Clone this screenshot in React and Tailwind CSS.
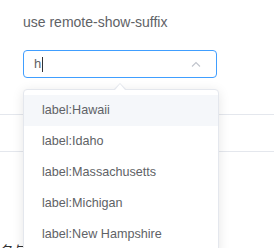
import React from 'react'

const OPTIONS = ['Hawaii', 'Idaho', 'Massachusetts', 'Michigan', 'New Hampshire']

function Chevron() {
  return (
    <svg width="10" height="6" viewBox="0 0 10 6" className="text-[#c0c4cc]">
      <path d="M1 5.5 L5 1.5 L9 5.5" fill="none" stroke="currentColor" strokeWidth="1.1" />
    </svg>
  )
}

function Dropdown() {
  return (
    <div className="absolute left-[23px] top-[89px] w-[196px] rounded border border-[#e4e7ed] bg-white py-[5px] shadow-[0_2px_12px_0_rgba(0,0,0,0.1)]">
      {/* popper arrow */}
      <span className="absolute -top-[7px] left-[90px] h-0 w-0 border-x-[6px] border-b-[6px] border-x-transparent border-b-[#e4e7ed]" />
      <span className="absolute -top-[6px] left-[91px] h-0 w-0 border-x-[5px] border-b-[6px] border-x-transparent border-b-white" />
      {OPTIONS.map((o, i) => (
        <div
          key={o}
          className={`flex h-[31px] items-center px-[18px] text-[12.6px] text-[#606266] ${i === 0 ? 'bg-[#f5f7fa]' : ''}`}
        >
          label:{o}
        </div>
      ))}
    </div>
  )
}

export default function App() {
  return (
    <div className="relative h-[248px] w-[274px] overflow-hidden bg-white font-['Liberation_Sans',Arial,sans-serif]">
      <div className="pl-[23px] pt-[13px] text-[14px] leading-[18px] text-[#606266]">use remote-show-suffix</div>
      <div className="ml-[23px] mt-[19px] flex h-[28px] w-[194px] items-center justify-between rounded border border-[#409eff] pl-[10px] pr-[15px]">
        <span className="flex items-center text-[13px] text-[#606266]">
          h<span className="ml-px h-[15px] w-px bg-[#303133]" />
        </span>
        <Chevron />
      </div>
      <div className="mt-[36px] h-px bg-[#e4e7ed]" />
      <div className="mt-[36px] h-px bg-[#e4e7ed]" />
      <div className="mt-[90px] pl-0 text-[14px] leading-[16px] text-[#303133] font-['Noto_Sans_CJK_SC',sans-serif]">
        名与
      </div>
      <Dropdown />
    </div>
  )
}
